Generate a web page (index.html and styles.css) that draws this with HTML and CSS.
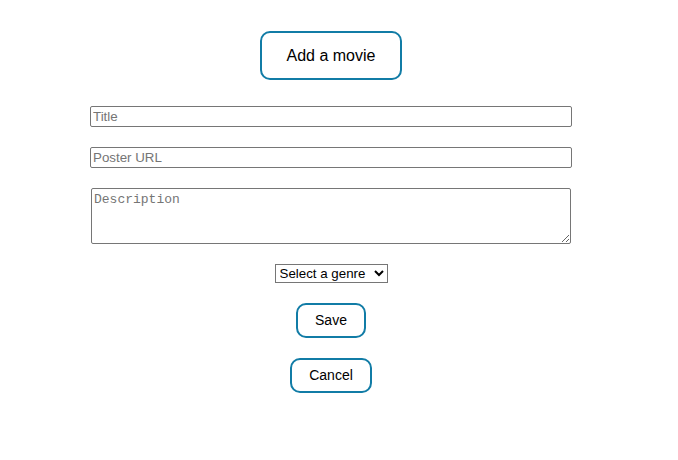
FILE: index.html
```html
<!DOCTYPE html>
<html>
<head>
<meta charset="utf-8">
<link rel="stylesheet" href="styles.css">
</head>
<body>
<div class="page">
  <button class="btn btn-add">Add a movie</button>
  <form class="form">
    <input class="field" type="text" placeholder="Title">
    <input class="field" type="text" placeholder="Poster URL">
    <textarea class="area" placeholder="Description"></textarea>
    <select class="genre">
      <option>Select a genre</option>
    </select>
    <button type="button" class="btn btn-save">Save</button>
    <button type="button" class="btn btn-cancel">Cancel</button>
  </form>
</div>
</body>
</html>
```
FILE: styles.css
```css
html, body {
  margin: 0;
  padding: 0;
  background: #fff;
}
body {
  font-family: "Liberation Sans", Arial, sans-serif;
}
.page {
  width: 662px;
  padding-top: 31px;
  display: flex;
  flex-direction: column;
  align-items: center;
}
.form {
  margin-top: 26px;
  display: flex;
  flex-direction: column;
  align-items: center;
  gap: 20px;
}
.btn {
  box-sizing: border-box;
  background: #fff;
  border: 2px solid #117ca6;
  border-radius: 10px;
  color: #000;
  font-family: "Liberation Sans", Arial, sans-serif;
  padding: 0;
}
.btn-add {
  width: 142px;
  height: 49px;
  font-size: 16px;
}
.btn-save {
  width: 70px;
  height: 35px;
  font-size: 14px;
  padding-bottom: 1px;
}
.btn-cancel {
  width: 82px;
  height: 35px;
  font-size: 14px;
  padding-bottom: 1px;
}
.field {
  box-sizing: border-box;
  width: 482px;
  height: 21px;
  border: 1px solid #767676;
  border-radius: 2px;
  padding: 1px 2px;
  font-family: "Liberation Sans", Arial, sans-serif;
  font-size: 13.33px;
}
.field::placeholder {
  color: #757575;
}
.area {
  box-sizing: border-box;
  width: 480px;
  height: 56px;
  border: 1px solid #767676;
  border-radius: 2px;
  padding: 3px 2px;
  font-family: "Liberation Mono", "Courier New", monospace;
  font-size: 13px;
  resize: both;
}
.area::placeholder {
  color: #757575;
}
.genre {
  box-sizing: border-box;
  width: 113px;
  height: 19px;
  font-family: "Liberation Sans", Arial, sans-serif;
  font-size: 13.33px;
  border: 1px solid #767676;
  border-radius: 0;
  background: #fff;
  color: #000;
}
```
